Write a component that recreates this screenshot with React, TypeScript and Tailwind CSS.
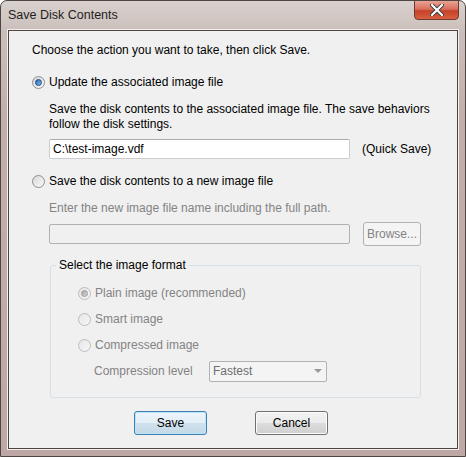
import React from 'react';

const font = { fontFamily: '"Liberation Sans", Arial, sans-serif' };

const Radio = ({ checked, disabled }: { checked?: boolean; disabled?: boolean }) => (
  <span
    className={
      'relative inline-flex h-[13px] w-[13px] shrink-0 items-center justify-center rounded-full border ' +
      (disabled
        ? 'border-[#bcbcbc] bg-gradient-to-br from-[#e6e6e6] to-[#f6f6f6]'
        : 'border-[#8e8f8f] bg-gradient-to-br from-[#d6d6d6] to-[#fbfbfb]')
    }
  >
    {checked && (
      <span
        className={
          'h-[7px] w-[7px] rounded-full ' +
          (disabled
            ? 'border border-[#9c9c9c] bg-gradient-to-br from-[#a6a6a6] to-[#d8d8d8]'
            : 'border border-[#1c4a85] bg-gradient-to-br from-[#2d63b4] to-[#7fc0f4]')
        }
      />
    )}
  </span>
);

const WinButton = ({ label, primary }: { label: string; primary?: boolean }) => (
  <button
    className={
      'h-[24px] w-[73px] rounded-[3px] border text-[12px] text-black ' +
      (primary
        ? 'border-[#3c7fb1] bg-[linear-gradient(#edf5fb_0%,#e3eef6_50%,#cfe2ee_50%,#c4d9e6_100%)] shadow-[inset_0_0_0_1px_#bde6fd]'
        : 'border-[#707070] bg-[linear-gradient(#f2f2f2_0%,#ebebeb_50%,#dddddd_50%,#cfcfcf_100%)] shadow-[inset_0_0_0_1px_#fcfcfc]')
    }
    style={font}
  >
    {label}
  </button>
);

export default function App() {
  return (
    <div
      className="relative flex h-[457px] w-[466px] flex-col overflow-hidden rounded-t-[7px] border border-[#4f4543] bg-[linear-gradient(180deg,#d8d1cd_0px,#cbbfbb_30px,#c2aeab_120px,#bea8a5_100%)] text-[12px] text-black"
      style={font}
    >
      {/* title bar */}
      <div className="flex h-[28px] shrink-0 items-center pl-[7px]">
        <span className="text-[12.5px] text-[#1e1e1e]">Save Disk Contents</span>
      </div>
      {/* close button */}
      <div className="absolute right-[6px] top-[-1px] flex h-[20px] w-[45px] items-center justify-center rounded-b-[4px] border border-[#6e3a32] bg-[linear-gradient(#e9a393_0%,#d8705c_45%,#c7412a_55%,#d8603f_100%)]">
        <svg width="14" height="12" viewBox="0 0 14 12">
          <path d="M2 1 L12 11 M12 1 L2 11" stroke="#3b3b3b" strokeWidth="4" strokeLinecap="round" />
          <path d="M2 1 L12 11 M12 1 L2 11" stroke="#ffffff" strokeWidth="2.2" strokeLinecap="round" />
        </svg>
      </div>

      {/* client area */}
      <div className="mx-[6px] mb-[6px] flex-1 border border-[#f4eeec]">
        <div className="h-full border border-[#4d4442] bg-[#f0f0f0] pl-[23px] pr-[8px]">
          <div className="mt-[11px] leading-[16px]">Choose the action you want to take, then click Save.</div>

          <div className="mt-[16px] flex items-center gap-[4px] leading-[16px]">
            <Radio checked />
            <span>Update the associated image file</span>
          </div>

          <div className="ml-[17px] mt-[12px] leading-[15px]">
            Save the disk contents to the associated image file. The save behaviors
            <br />
            follow the disk settings.
          </div>

          <div className="ml-[17px] mt-[7px] flex items-center gap-[12px]">
            <div className="flex h-[20px] w-[301px] items-center rounded-[2px] border border-[#c9ccd1] border-t-[#abadb3] bg-white pl-[3px]">
              C:\test-image.vdf
            </div>
            <span>(Quick Save)</span>
          </div>

          <div className="mt-[14px] flex items-center gap-[4px] leading-[16px]">
            <Radio />
            <span>Save the disk contents to a new image file</span>
          </div>

          <div className="ml-[17px] mt-[11px] leading-[16px] text-[#838383]">
            Enter the new image file name including the full path.
          </div>

          <div className="ml-[17px] mt-[6px] flex items-center gap-[13px]">
            <div className="h-[20px] w-[301px] rounded-[2px] border border-[#adb2b5] bg-[#f0f0f0]" />
            <div className="flex h-[24px] w-[58px] items-center justify-center rounded-[3px] border border-[#adb2b5] bg-[#f4f4f4] text-[#838383]">
              Browse...
            </div>
          </div>

          <fieldset className="ml-[18px] mt-[11px] h-[141px] w-[371px] rounded-[3px] border border-[#d5dfe5] px-0 pb-0 pt-0">
            <legend className="ml-[5px] px-[3px] leading-[16px]">Select the image format</legend>
            <div className="ml-[27px] mt-[12px] flex flex-col gap-[10px] text-[#838383]">
              <div className="flex items-center gap-[4px] leading-[16px]">
                <Radio checked disabled />
                <span>Plain image (recommended)</span>
              </div>
              <div className="flex items-center gap-[4px] leading-[16px]">
                <Radio disabled />
                <span>Smart image</span>
              </div>
              <div className="flex items-center gap-[4px] leading-[16px]">
                <Radio disabled />
                <span>Compressed image</span>
              </div>
              <div className="flex h-[16px] items-center leading-[16px]">
                <span className="ml-[16px] w-[115px]">Compression level</span>
                <div className="flex h-[21px] w-[118px] shrink-0 items-center justify-between rounded-[2px] border border-[#adb2b5] bg-[#f4f4f4] pl-[3px] pr-[4px] text-[#6d6d6d]">
                  <span>Fastest</span>
                  <svg width="8" height="5" viewBox="0 0 8 5">
                    <path d="M0 0 L8 0 L4 4 Z" fill="#9a9a9a" />
                  </svg>
                </div>
              </div>
            </div>
          </fieldset>

          <div className="mt-[13px] flex gap-[48px] pl-[102px]">
            <WinButton label="Save" primary />
            <WinButton label="Cancel" />
          </div>
        </div>
      </div>
    </div>
  );
}
